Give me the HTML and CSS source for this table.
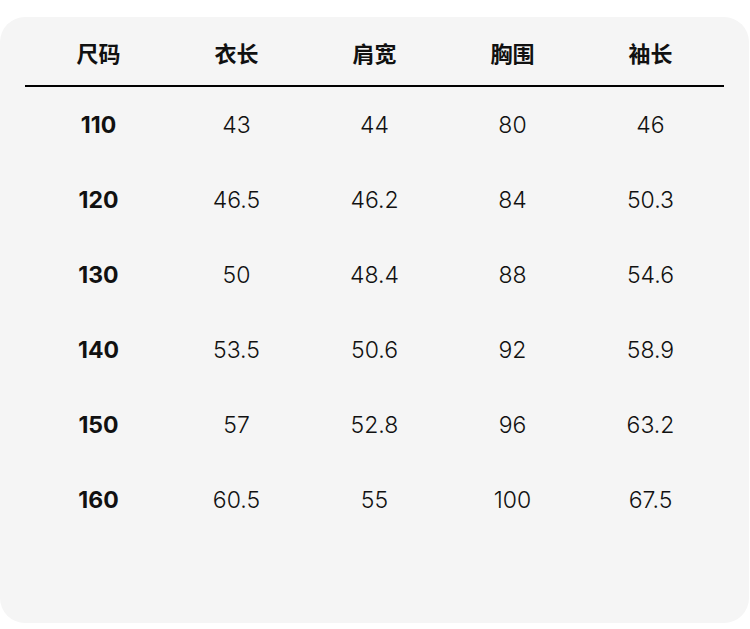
FILE: index.html
```html
<!DOCTYPE html>
<html lang="zh">
<head>
<meta charset="utf-8">
<link rel="stylesheet" href="styles.css">
</head>
<body>
<div class="card">
  <div class="row head">
    <div>尺码</div><div>衣长</div><div>肩宽</div><div>胸围</div><div>袖长</div>
  </div>
  <div class="rule"></div>
  <div class="row"><div class="size">110</div><div>43</div><div>44</div><div>80</div><div>46</div></div>
  <div class="row"><div class="size">120</div><div>46.5</div><div>46.2</div><div>84</div><div>50.3</div></div>
  <div class="row"><div class="size">130</div><div>50</div><div>48.4</div><div>88</div><div>54.6</div></div>
  <div class="row"><div class="size">140</div><div>53.5</div><div>50.6</div><div>92</div><div>58.9</div></div>
  <div class="row"><div class="size">150</div><div>57</div><div>52.8</div><div>96</div><div>63.2</div></div>
  <div class="row"><div class="size">160</div><div>60.5</div><div>55</div><div>100</div><div>67.5</div></div>
</div>
</body>
</html>
```
FILE: styles.css
```css
html, body {
  margin: 0;
  padding: 0;
  background: #ffffff;
}
body {
  width: 750px;
  height: 629px;
  padding-top: 17px;
  box-sizing: border-box;
  font-family: "Inter", "Noto Sans CJK SC", sans-serif;
  color: #111;
}
.card {
  width: 749px;
  height: 606px;
  background: #f5f5f5;
  border-radius: 25px;
  padding: 0 25px;
  box-sizing: border-box;
}
.row {
  display: grid;
  grid-template-columns: repeat(5, 138px);
  justify-content: center;
  height: 75px;
  align-items: center;
  text-align: center;
  font-size: 23px;
  font-weight: 300;
}
.row.head {
  height: 68px;
  padding-top: 1px;
  box-sizing: border-box;
  font-family: "Noto Sans CJK SC", sans-serif;
  font-weight: 700;
  font-size: 22px;
}
.size {
  font-weight: 700;
}
.rule {
  height: 2px;
  background: #000;
}
```
